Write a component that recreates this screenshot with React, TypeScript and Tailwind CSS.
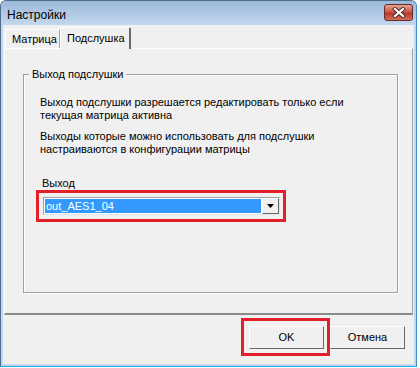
import React from "react";

export default function App() {
  return (
    <div className="w-[420px] h-[368px] bg-white font-['Liberation_Sans',Arial,sans-serif] text-black">
      <div className="w-[417px] h-[367px] flex flex-col rounded-t-[6px] border border-[#4f6d8f] border-b-[#2aa6e0] border-r-[#3a8fd0] bg-[#c2d8ef] overflow-hidden">
        {/* title bar */}
        <div className="h-[24px] flex items-center justify-between pl-[6px] pr-[3px] bg-[linear-gradient(#9cb8d8,#c3d8ef)]">
          <span className="text-[12px] leading-[14px] pt-[3px]">Настройки</span>
          <div className="w-[29px] h-[17px] -mt-[2px] rounded-[3px] border border-[#6b2b28] bg-[linear-gradient(#e6a193,#c95a4c_45%,#b8392c_55%,#d26d5a)] flex items-center justify-center">
            <svg width="14" height="11" viewBox="0 0 14 11">
              <path d="M3 2 L11 9 M11 2 L3 9" stroke="#4a2a28" strokeWidth="4" strokeLinecap="square" />
              <path d="M3 2 L11 9 M11 2 L3 9" stroke="#ffffff" strokeWidth="2.2" strokeLinecap="square" />
            </svg>
          </div>
        </div>
        {/* client */}
        <div className="flex-1 mx-[2px] mb-[2px] bg-[#f0f0f0] flex flex-col text-[11px] leading-[13px]">
          {/* tab strip */}
          <div className="h-[23px] flex items-end pl-[2px]">
            <div className="w-[55px] h-[19px] border-t border-l border-white border-r border-r-[#a0a0a0] rounded-t-[2px] flex items-center pl-[6px]">
              Матрица
            </div>
            <div className="relative z-10 w-[71px] h-[22px] -mb-px bg-[#f0f0f0] border-t border-l border-white border-r-2 border-r-[#696969] rounded-t-[2px] flex items-start pt-[4px] pl-[6px]">
              Подслушка
            </div>
          </div>
          {/* pane */}
          <div className="mx-[1px] h-[267px] border-t border-l border-white border-r border-r-[#a0a0a0] border-b-2 border-b-[#8a8a8a] pt-[19px] pl-[18px] pr-[14px]">
            <fieldset className="h-[225px] border border-[#a0a0a0] shadow-[1px_1px_0_#ffffff,inset_1px_1px_0_#ffffff]">
              <legend className="ml-[5px] px-[3px] bg-[#f0f0f0] leading-[13px]">Выход подслушки</legend>
              <div className="pt-[15px] px-[16px]">
                <p>Выход подслушки разрешается редактировать только если<br />текущая матрица активна</p>
                <p className="mt-[8px]">Выходы которые можно использовать для подслушки<br />настраиваются в конфигурации матрицы</p>
                <div className="mt-[21px] -ml-[4px]">
                  <div className="pl-[6px]">Выход</div>
                  <div className="w-[250px] h-[32px] border-[3px] border-[#e3202a] pl-[4px] pt-[4px]">
                    <div className="w-[237px] h-[18px] border border-t-[#a0a0a0] border-l-[#a0a0a0] border-r-[#e3e3e3] border-b-[#e3e3e3] bg-white flex">
                      <div className="flex-1 m-[1px] bg-[#3399ff] text-white flex items-center pl-[1px]">out_AES1_04</div>
                      <div className="w-[17px] h-[16px] border border-t-white border-l-white border-r-[#696969] border-b-[#696969] bg-[#f0f0f0] flex items-center justify-center">
                        <svg width="7" height="4" viewBox="0 0 7 4">
                          <path d="M0 0 H7 L3.5 4 Z" fill="#000" />
                        </svg>
                      </div>
                    </div>
                  </div>
                </div>
              </div>
            </fieldset>
          </div>
          {/* buttons */}
          <div className="flex-1 flex items-start justify-end pt-[3px] pr-[9px]">
            <div className="w-[89px] h-[38px] border-[3px] border-[#e3202a] pl-[5px] pt-[5px]">
              <div className="w-[75px] h-[23px] border border-t-white border-l-white border-r-[#696969] border-b-[#696969] bg-[#f0f0f0] flex items-center justify-center">
                OK
              </div>
            </div>
            <div className="w-[75px] h-[23px] mt-[8px] border border-t-white border-l-white border-r-[#696969] border-b-[#696969] bg-[#f0f0f0] flex items-center justify-center">
              Отмена
            </div>
          </div>
        </div>
      </div>
    </div>
  );
}
